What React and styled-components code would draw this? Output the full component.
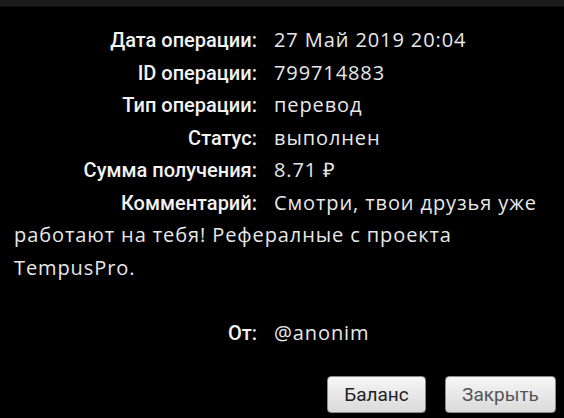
import React from "react";
import styled, { createGlobalStyle } from "styled-components";

const GlobalStyle = createGlobalStyle`
  html, body {
    margin: 0;
    padding: 0;
    background: #000;
  }
  body {
    width: 564px;
    height: 418px;
    overflow: hidden;
  }
`;

const rows = [
  { label: "Дата операции:", value: "27 Май 2019 20:04" },
  { label: "ID операции:", value: "799714883" },
  { label: "Тип операции:", value: "перевод" },
  { label: "Статус:", value: "выполнен" },
  { label: "Сумма получения:", value: "8.71 ₽" },
  {
    label: "Комментарий:",
    value: "Смотри, твои друзья уже работают на тебя! Рефералные с проекта TempusPro.",
  },
];

const App = () => {
  return (
    <Page>
      <GlobalStyle />
      <TopBar />
      <Details>
        {rows.map((r) => (
          <Row key={r.label}>
            <Label>{r.label}</Label>
            <Value>{r.value}</Value>
          </Row>
        ))}
        <Row spaced>
          <Label>От:</Label>
          <Value>@anonim</Value>
        </Row>
      </Details>
      <Footer>
        <Button width="99px">Баланс</Button>
        <Button width="111px" muted>
          Закрыть
        </Button>
      </Footer>
    </Page>
  );
};

const Page = styled.div`
  width: 564px;
  height: 418px;
  background: #000;
  display: flex;
  flex-direction: column;
`;

const TopBar = styled.div`
  height: 6px;
  background: #1b1b1b;
  border-bottom: 1px solid #0e0e0e;
`;

const Details = styled.div`
  padding: 17px 14px 0 14px;
  font-family: "Open Sans", "Liberation Sans", sans-serif;
  font-size: 20px;
  color: #e8e8e8;
`;

const Row = styled.div`
  line-height: 32.5px;
  margin-top: ${(p) => (p.spaced ? "32.5px" : "0")};
`;

const Label = styled.span`
  display: inline-block;
  width: 243px;
  text-align: right;
  font-family: Roboto, "Liberation Sans", sans-serif;
  font-weight: 500;
  color: #f2f2f2;
  margin-right: 17px;
`;

const Value = styled.span`
  font-weight: 400;
  letter-spacing: 0.9px;
`;

const Footer = styled.div`
  display: flex;
  justify-content: flex-end;
  gap: 19px;
  padding: 0 8px 0 0;
  margin-top: 27px;
`;

const Button = styled.button`
  width: ${(p) => p.width};
  height: 37px;
  padding: 0;
  border: 1px solid #8c8c8c;
  border-radius: 4px;
  background: linear-gradient(#f6f6f6, #dadada);
  font-family: Roboto, "Liberation Sans", sans-serif;
  font-size: 19px;
  color: ${(p) => (p.muted ? "#555" : "#222")};
`;

export default App;
